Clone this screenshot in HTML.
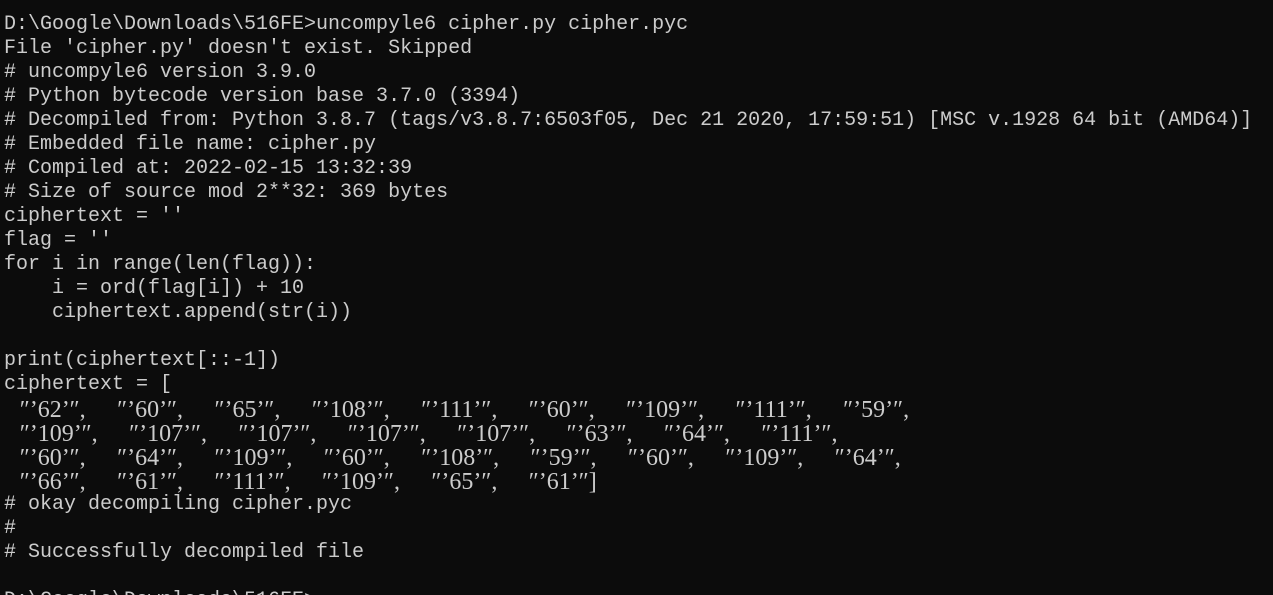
<!DOCTYPE html>
<html><head><meta charset="utf-8"><style>
html,body{margin:0;padding:0;background:#0c0c0c;width:1273px;height:595px;overflow:hidden}
.w{padding:13px 0 0 4px;font-family:"Liberation Mono",monospace;font-size:20px;line-height:24px;color:#cccccc;white-space:pre}
.w div{height:24px}
.s{font-family:"Liberation Serif",serif;font-size:24px;word-spacing:9.7px;line-height:26px}
</style></head><body><div class="w"><div>D:\Google\Downloads\516FE&gt;uncompyle6 cipher.py cipher.pyc</div><div>File 'cipher.py' doesn't exist. Skipped</div><div># uncompyle6 version 3.9.0</div><div># Python bytecode version base 3.7.0 (3394)</div><div># Decompiled from: Python 3.8.7 (tags/v3.8.7:6503f05, Dec 21 2020, 17:59:51) [MSC v.1928 64 bit (AMD64)]</div><div># Embedded file name: cipher.py</div><div># Compiled at: 2022-02-15 13:32:39</div><div># Size of source mod 2**32: 369 bytes</div><div>ciphertext = ''</div><div>flag = ''</div><div>for i in range(len(flag)):</div><div>    i = ord(flag[i]) + 10</div><div>    ciphertext.append(str(i))</div><div></div><div>print(ciphertext[::-1])</div><div>ciphertext = [</div><div class="s"> ″’62’″,  ″’60’″,  ″’65’″,  ″’108’″,  ″’111’″,  ″’60’″,  ″’109’″,  ″’111’″,  ″’59’″,</div><div class="s"> ″’109’″,  ″’107’″,  ″’107’″,  ″’107’″,  ″’107’″,  ″’63’″,  ″’64’″,  ″’111’″,</div><div class="s"> ″’60’″,  ″’64’″,  ″’109’″,  ″’60’″,  ″’108’″,  ″’59’″,  ″’60’″,  ″’109’″,  ″’64’″,</div><div class="s"> ″’66’″,  ″’61’″,  ″’111’″,  ″’109’″,  ″’65’″,  ″’61’″]</div><div># okay decompiling cipher.pyc</div><div>#</div><div># Successfully decompiled file</div><div></div><div>D:\Google\Downloads\516FE&gt;</div></div></body></html>
